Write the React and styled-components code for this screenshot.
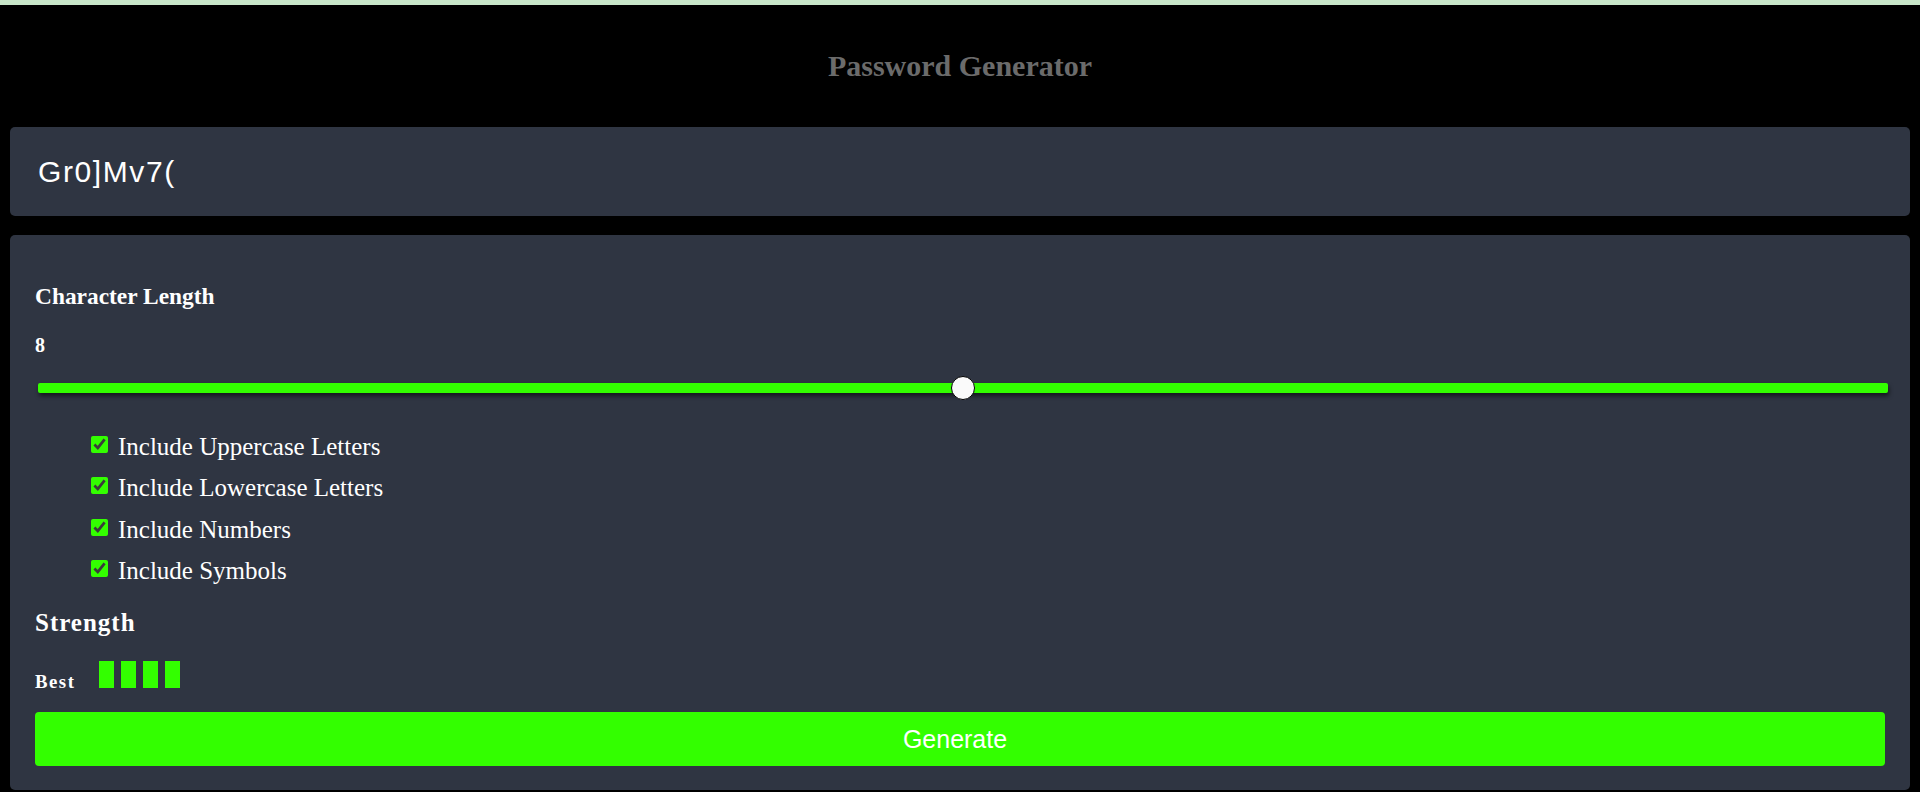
import { useState } from "react";
import styled, { createGlobalStyle } from "styled-components";

const GlobalStyle = createGlobalStyle`
  body {
    margin: 0;
    background: #000;
    font-family: "Liberation Serif", "Times New Roman", serif;
  }
`;

const Page = styled.div`
  min-height: 787px;
  border-top: 5px solid #c8e6c9;
  padding: 0 10px;
  background: #000;
`;

const Header = styled.h2`
  height: 122px;
  margin: 0;
  display: flex;
  align-items: center;
  justify-content: center;
  font-size: 30px;
  font-weight: 700;
  color: #6b6b6b;
`;

const Panel = styled.div`
  background: #2f3542;
  border-radius: 5px;
`;

const Output = styled(Panel)`
  height: 89px;
  display: flex;
  align-items: center;
  padding-left: 28px;
  font-family: "Liberation Sans", Arial, sans-serif;
  font-size: 30px;
  letter-spacing: 1.6px;
  color: #fff;
`;

const Settings = styled(Panel)`
  margin-top: 19px;
  padding: 47px 25px 24px;
  color: #fff;
`;

const Label = styled.h3`
  margin: 0;
  font-size: 23.4px;
  line-height: 28px;
  font-weight: 700;
`;

const Value = styled.div`
  margin-top: 23px;
  font-size: 20px;
  line-height: 24px;
  font-weight: 700;
`;

const Slider = styled.input`
  -webkit-appearance: none;
  appearance: none;
  display: block;
  width: 100%;
  height: 10px;
  margin: 26px -3px 0 3px;
  background: #33ff00;
  border-radius: 2px;
  box-shadow: 1px 3px 4px rgba(0, 0, 0, 0.55);
  outline: none;

  &::-webkit-slider-thumb {
    -webkit-appearance: none;
    width: 24px;
    height: 24px;
    border-radius: 50%;
    background: #fafafa;
    border: 1px solid #000;
    box-sizing: border-box;
    cursor: pointer;
  }
`;

const Options = styled.ul`
  list-style: none;
  margin: 33px 0 0;
  padding-left: 56px;
`;

const Option = styled.li`
  display: flex;
  align-items: center;
  font-size: 25px;
  line-height: 41.3px;
`;

const Check = styled.input`
  width: 17px;
  height: 17px;
  margin: -4px 10px 0 0;
  accent-color: #33ff00;
`;

const StrengthTitle = styled.h3`
  margin: 16.4px 0 0;
  font-size: 25px;
  line-height: 30px;
  font-weight: 700;
  letter-spacing: 1px;
`;

const StrengthRow = styled.div`
  display: flex;
  align-items: baseline;
  margin-top: 23.4px;
`;

const StrengthText = styled.span`
  font-size: 18.75px;
  line-height: 20px;
  font-weight: 700;
  letter-spacing: 1.5px;
`;

const Bars = styled.div`
  display: flex;
  align-items: baseline;
  gap: 7px;
  margin-left: 24px;
`;

const Bar = styled.div`
  width: 15px;
  height: 27px;
  background: ${(p) => (p.$on ? "#33ff00" : "transparent")};
  border: ${(p) => (p.$on ? "none" : "2px solid #fff")};
  box-sizing: border-box;
`;

const GenerateButton = styled.button`
  display: block;
  width: 100%;
  height: 54px;
  margin-top: 20.3px;
  padding: 0 10px 0 0;
  border: none;
  border-radius: 4px;
  background: #33ff00;
  color: #fff;
  font-family: "Liberation Sans", Arial, sans-serif;
  font-size: 25px;
  cursor: pointer;
`;

const labels = [
  "Include Uppercase Letters",
  "Include Lowercase Letters",
  "Include Numbers",
  "Include Symbols",
];

export default function App() {
  const [length, setLength] = useState(8);
  const [checked, setChecked] = useState([true, true, true, true]);

  return (
    <>
      <GlobalStyle />
      <Page>
        <Header>Password Generator</Header>
        <Output>Gr0]Mv7(</Output>
        <Settings>
          <Label>Character Length</Label>
          <Value>{length}</Value>
          <Slider
            type="range"
            min="0"
            max="16"
            value={length}
            onChange={(e) => setLength(Number(e.target.value))}
          />
          <Options>
            {labels.map((text, i) => (
              <Option key={text}>
                <Check
                  type="checkbox"
                  checked={checked[i]}
                  onChange={() =>
                    setChecked((c) => c.map((v, j) => (j === i ? !v : v)))
                  }
                />
                {text}
              </Option>
            ))}
          </Options>
          <StrengthTitle>Strength</StrengthTitle>
          <StrengthRow>
            <StrengthText>Best</StrengthText>
            <Bars>
              {[0, 1, 2, 3].map((i) => (
                <Bar key={i} $on />
              ))}
            </Bars>
          </StrengthRow>
          <GenerateButton>Generate</GenerateButton>
        </Settings>
      </Page>
    </>
  );
}
